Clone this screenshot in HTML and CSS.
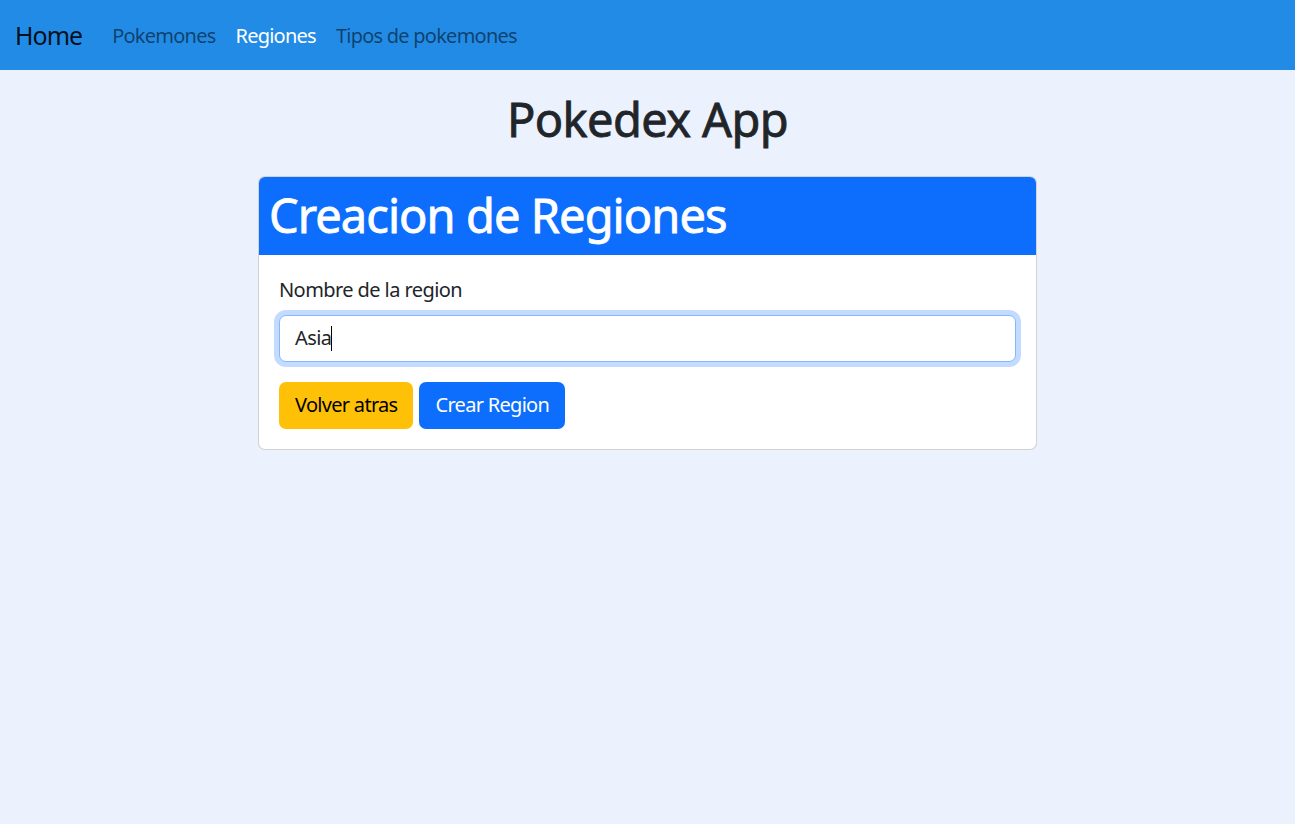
FILE: index.html
```html
<!DOCTYPE html>
<html lang="es">
<head>
<meta charset="utf-8">
<title>Pokedex App</title>
<link rel="stylesheet" href="styles.css">
</head>
<body>
<nav class="navbar">
  <a class="brand" href="#">Home</a>
  <ul class="nav">
    <li><a class="nav-link" href="#">Pokemones</a></li>
    <li><a class="nav-link active" href="#">Regiones</a></li>
    <li><a class="nav-link" href="#">Tipos de pokemones</a></li>
  </ul>
</nav>
<main class="main">
  <h1 class="title">Pokedex App</h1>
  <section class="card">
    <h1 class="card-header">Creacion de Regiones</h1>
    <div class="card-body">
      <label class="label">Nombre de la region</label>
      <div class="form-control">Asia<span class="caret"></span></div>
      <div class="actions">
        <button class="btn btn-warning">Volver atras</button>
        <button class="btn btn-primary">Crear Region</button>
      </div>
    </div>
  </section>
</main>
</body>
</html>
```
FILE: styles.css
```css
* { box-sizing: border-box; }
html, body { margin: 0; padding: 0; }
body {
  background: #ebf1fd;
  font-family: "Noto Sans", "Open Sans", sans-serif;
  font-size: 20px;
  line-height: 1.5;
  color: #212529;
  min-height: 824px;
}
.navbar {
  height: 70px;
  background: #228be6;
  display: flex;
  align-items: center;
  padding: 2px 15px 0;
}
.brand {
  font-size: 25px;
  letter-spacing: -0.04em;
  color: rgba(0,0,0,0.9);
  text-decoration: none;
  margin-right: 20px;
}
.nav {
  display: flex;
  list-style: none;
  margin: 0;
  padding: 0;
}
.nav-link {
  display: block;
  padding: 10px 10px;
  font-size: 20px;
  letter-spacing: -0.038em;
  color: rgba(0,0,0,0.55);
  text-decoration: none;
}
.nav-link.active { color: #fff; }
.main {
  display: flex;
  flex-direction: column;
  align-items: center;
}
.title {
  margin: 21px 0 29px;
  font-size: 47px;
  font-weight: 400;
  letter-spacing: -0.013em;
  line-height: 1.2;
  text-align: center;
  -webkit-text-stroke: 0.8px #212529;
}
.card {
  width: 779px;
  background: #fff;
  border: 1px solid rgba(0,0,0,0.175);
  border-radius: 7px;
  overflow: hidden;
}
.card-header {
  margin: 0;
  background: #0d6efd;
  color: #fff;
  font-size: 47px;
  font-weight: 400;
  letter-spacing: -0.02em;
  line-height: 1.2;
  padding: 10px 10px 11px;
  -webkit-text-stroke: 0.8px #fff;
}
.card-body { padding: 20px; }
.label { display: block; margin-bottom: 10px; letter-spacing: -0.029em; }
.form-control {
  height: 47px;
  border: 1px solid #86b7fe;
  border-radius: 7px;
  box-shadow: 0 0 0 5px rgba(13,110,253,0.25);
  padding: 7px 15px;
  display: flex;
  align-items: center;
  margin-bottom: 20px;
  background: #fff;
  letter-spacing: -0.03em;
}
.caret {
  display: inline-block;
  width: 1px;
  height: 25px;
  background: #000;
}
.actions { display: flex; gap: 6px; }
.btn {
  font-family: inherit;
  font-size: 20px;
  line-height: 1.5;
  letter-spacing: -0.035em;
  padding: 7.5px 15px;
  border: 1px solid transparent;
  border-radius: 7px;
}
.btn-warning { background: #ffc107; color: #000; }
.btn-primary { background: #0d6efd; color: #fff; }
```
